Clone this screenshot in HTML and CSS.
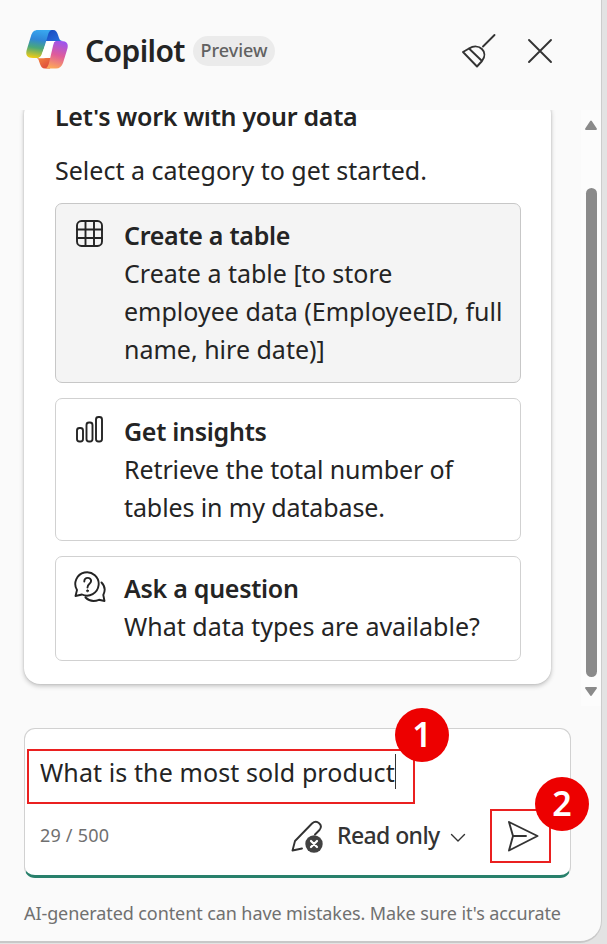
FILE: index.html
```html
<!DOCTYPE html>
<html lang="en">
<head>
<meta charset="utf-8">
<title>Copilot</title>
<link rel="stylesheet" href="styles.css">
</head>
<body>
<main class="panel">
  <header class="header">
    <svg class="logo" viewBox="0 0 44 42">
      <defs>
        <linearGradient id="cool" x1="0.55" y1="0" x2="0.4" y2="1"><stop offset="0" stop-color="#38a7ef"/><stop offset=".35" stop-color="#2f86d8"/><stop offset=".65" stop-color="#4ba878"/><stop offset="1" stop-color="#ebcb18"/></linearGradient>
        <linearGradient id="warm" x1="0.65" y1="0" x2="0.4" y2="1"><stop offset="0" stop-color="#9c55ee"/><stop offset=".5" stop-color="#df5b9b"/><stop offset="1" stop-color="#fda858"/></linearGradient>
        <linearGradient id="blue" x1="0" y1="0" x2="1" y2="1"><stop offset="0" stop-color="#1746bd"/><stop offset="1" stop-color="#2872df"/></linearGradient>
        <linearGradient id="orange" x1="0" y1="0" x2="1" y2="1"><stop offset="0" stop-color="#f5883f"/><stop offset="1" stop-color="#d9403c"/></linearGradient>
      </defs>
      <path d="M22 1h6c3 0 4 2 5 5l1 3c.7 2 1.500 3 4 3H20z" fill="url(#blue)"/>
      <path d="M11 29c2.500 0 2.500 2 4 6 1 2.500 2 4.500 5 4.500h5L27 29z" fill="url(#orange)"/>
      <path d="M13 1h15c-3 0-4 1.500-5 5l-5.500 18c-1 3.500-2.500 5-6 5H8c-6 0-8-3-6-9L6 7c1.200-4 3-6 7-6z" fill="url(#cool)"/>
      <path d="M31 12h5c6 0 8 3 6 9l-4 13c-1.200 3.500-3.500 5.500-7 5.500H19c3 0 4-2 5-5.500l4-17c1-3.500 1-5 3-5z" fill="url(#warm)"/>
      <path d="M26 12h6c-3 0-3.700 2-4.500 4.500l-3 8.500c-1 3-2.500 4.300-6 4.300h-7c3.500 0 4.500-1.800 5.500-5l3-7.500c1-3 2.500-4.800 6-4.800z" fill="#fff"/>
    </svg>
    <h1 class="brand">Copilot</h1>
    <span class="tag">Preview</span>
    <div class="actions">
      <svg class="broom" viewBox="0 0 36 36"><path d="M33.500 2 22 13.500M2 19l6-3.500c10-6 20 3 13 12.500l-5 5.500zM8 15.500 21 28"/></svg>
      <svg class="close" viewBox="0 0 26 26"><path d="m2 2 22 22M24 2 2 24"/></svg>
    </div>
  </header>

  <section class="scroller">
    <div class="card">
      <h2 class="heading">Let's work with your data</h2>
      <p class="sub">Select a category to get started.</p>
      <div class="option option-active">
        <svg class="icon" viewBox="0 0 32 32"><rect x="3" y="3" width="25" height="25" rx="4.500"/><path d="M11.500 3v25M20 3v25M3 11.500h25M3 20h25"/></svg>
        <div>
          <h3>Create a table</h3>
          <p>Create a table [to store<br>employee data (EmployeeID, full<br>name, hire date)]</p>
        </div>
      </div>
      <div class="option option-insights">
        <svg class="icon" viewBox="0 0 32 32"><rect x="3" y="14" width="6" height="13.500" rx="2.500"/><rect x="12.500" y="8.500" width="6" height="19" rx="2.500"/><rect x="22" y="3" width="6" height="24.500" rx="2.500"/></svg>
        <div>
          <h3>Get insights</h3>
          <p><span class="tight">Retrieve the total number of</span><br><span class="tight">tables in my database.</span></p>
        </div>
      </div>
      <div class="option option-ask">
        <svg class="icon" viewBox="0 0 32 32"><path d="M1.500 25 3 19A11.700 11.700 0 1 1 8 23.500zM27.500 11.500c3.500 3.500 4 8 1.800 12.500l1.200 6-5.500-1.200c-5 2-10 1.200-13.500-2.300M10.300 10.500c0-5 7-4.500 6.800-.5C17 13 13.500 12.500 13.500 16.500"/><circle cx="13.500" cy="19.800" r="1" class="dot"/></svg>
        <div>
          <h3>Ask a question</h3>
          <p>What data types are available?</p>
        </div>
      </div>
    </div>
    <div class="scrollbar">
      <svg class="arrow" viewBox="0 0 14 12"><path d="M7 2.500 12 10H2z"/></svg>
      <div class="thumb"></div>
      <svg class="arrow" viewBox="0 0 14 12"><path d="M2 2h10L7 9z"/></svg>
    </div>
  </section>

  <section class="composer">
    <div class="prompt"><span class="prompt-text">What is the most sold product</span><i class="caret"></i><b class="badge">1</b></div>
    <div class="toolbar">
      <span class="count">29 / 500</span>
      <svg class="pen" viewBox="0 0 34 36"><path d="M12 30.500 2.500 32.500 5 23 22 5.500c5-4.500 11.500 1.500 7.500 6.500l-4.500 4.500"/><circle cx="24" cy="26" r="8.700"/><path class="cross" d="m21 23 6 6m0-6-6 6"/></svg>
      <span class="mode">Read only</span>
      <svg class="chevron" viewBox="0 0 16 10"><path d="m1.500 1.500 6.500 6.500 6.500-6.500"/></svg>
      <div class="send"><svg viewBox="0 0 34 34"><path d="M3 3 31.500 17 3 31.500 7 17zM7 17h13"/></svg><b class="badge">2</b></div>
    </div>
  </section>
  <p class="notice">AI-generated content can have mistakes. Make sure it's accurate</p>
</main>
</body>
</html>
```
FILE: styles.css
```css
* { box-sizing: border-box; }
body { margin: 0; height: 944px; overflow: hidden; background: #e3e3e3; color: #242424; font-family: "Noto Sans", "Open Sans", sans-serif; }
h1, h2, h3, p { margin: 0; font-weight: 400; white-space: nowrap; }
svg { display: block; flex: none; fill: none; stroke: #333; stroke-width: 1.9; stroke-linecap: round; stroke-linejoin: round; }
.panel { width: 602px; height: 943px; background: #fafafa; border-right: 1px solid #ccc; border-bottom: 2px solid #c8c8c8; border-radius: 0 0 22px 0; }
.header { height: 110px; padding: 0 48px 8px 25px; display: flex; align-items: center; }
.logo { width: 44px; height: 42px; stroke: none; margin-top: -2px; }
.brand { margin-left: 16px; width: 101px; font-size: 30px; font-weight: 600; line-height: 40px; letter-spacing: -.6px; }
.tag { margin-left: 7px; width: 82px; height: 30px; border-radius: 15px; background: #ebebeb; color: #616161; font-size: 18px; font-weight: 500; line-height: 29px; text-align: center; letter-spacing: 0; }
.actions { margin-left: auto; display: flex; align-items: center; gap: 30px; }
.broom { width: 36px; height: 36px; }
.close { width: 26px; height: 26px; }
.scroller { height: 596px; padding-left: 24px; display: flex; justify-content: space-between; overflow: hidden; }
.card { width: 527px; height: 586px; margin-top: -12px; padding: 0 30px 0 31px; background: #fff; border-radius: 16px; box-shadow: 0 2px 5px rgba(0,0,0,.23), 0 0 2px rgba(0,0,0,.15); line-height: 38px; font-size: 25px; }
.heading { margin-top: -1px; font-size: 25px; font-weight: 600; line-height: 38px; letter-spacing: -.28px; }
.sub { margin: 16px 0 14px; }
.option { height: 180px; margin-bottom: 15px; padding: 12px 18px; display: flex; gap: 18px; border: 1px solid #d1d1d1; border-radius: 7px; }
.option h3 { font-size: 25px; font-weight: 600; line-height: 38px; letter-spacing: -.28px; }
.tight { letter-spacing: -.1px; }
.option-active { background: #f4f4f4; border-color: #c7c7c7; }
.option-insights { height: 143px; padding-top: 13px; }
.option-ask { height: 105px; }
.icon { width: 32px; height: 32px; margin-top: 2px; stroke: #242424; }
.dot { fill: #242424; stroke-width: .8; }
.scrollbar { width: 20px; height: 596px; background: #fcfcfc; display: flex; flex-direction: column; align-items: center; padding-top: 9px; }
.arrow { width: 14px; height: 12px; flex: none; fill: #8a8a8a; stroke: #8a8a8a; }
.thumb { width: 11px; height: 489px; flex: none; margin: 57px 0 9px; border-radius: 6px; background: #8a8a8a; }
.composer { width: 547px; height: 150px; margin: 22px 0 0 24px; padding: 20px 19px 0 2px; background: #fff; border: 1px solid #d1d1d1; border-bottom: 3px solid #28806b; border-radius: 11px; }
.prompt { position: relative; width: 388px; height: 55px; padding-left: 11px; display: flex; border: 2px solid #ea2020; font-size: 25px; line-height: 43px; letter-spacing: .1px; }
.caret { width: 1px; height: 35px; margin-top: 3px; background: #333; }
.badge { position: absolute; width: 54px; height: 54px; border-radius: 50%; background: #ed0000; color: #fff; font-size: 34px; font-weight: 600; line-height: 52px; text-align: center; }
.prompt .badge { left: 366px; top: -43px; }
.toolbar { display: flex; align-items: center; height: 54px; margin-top: 5px; padding-left: 13px; }
.count { width: 250px; margin-top: -2px; color: #707070; font-size: 18px; letter-spacing: .2px; }
.pen { width: 34px; height: 36px; }
.pen circle { fill: #424242; stroke: none; }
.pen .cross { stroke: #fff; stroke-width: 2.200; }
.mode { width: 103px; margin: -2px 0 0 13px; color: #333; font-size: 23px; font-weight: 500; white-space: nowrap; letter-spacing: -.6px; }
.chevron { width: 16px; height: 10px; margin: 3px 0 0 10px; stroke-width: 1.400; }
.send { position: relative; width: 61px; height: 54px; margin-left: auto; padding: 8px 0 0 14px; border: 2px solid #ea2020; }
.send svg { width: 34px; height: 34px; }
.send .badge { left: 43px; top: -34px; }
.notice { margin: 21px 0 0 24px; color: #707070; font-size: 18px; line-height: 28px; letter-spacing: -.09px; }
```
